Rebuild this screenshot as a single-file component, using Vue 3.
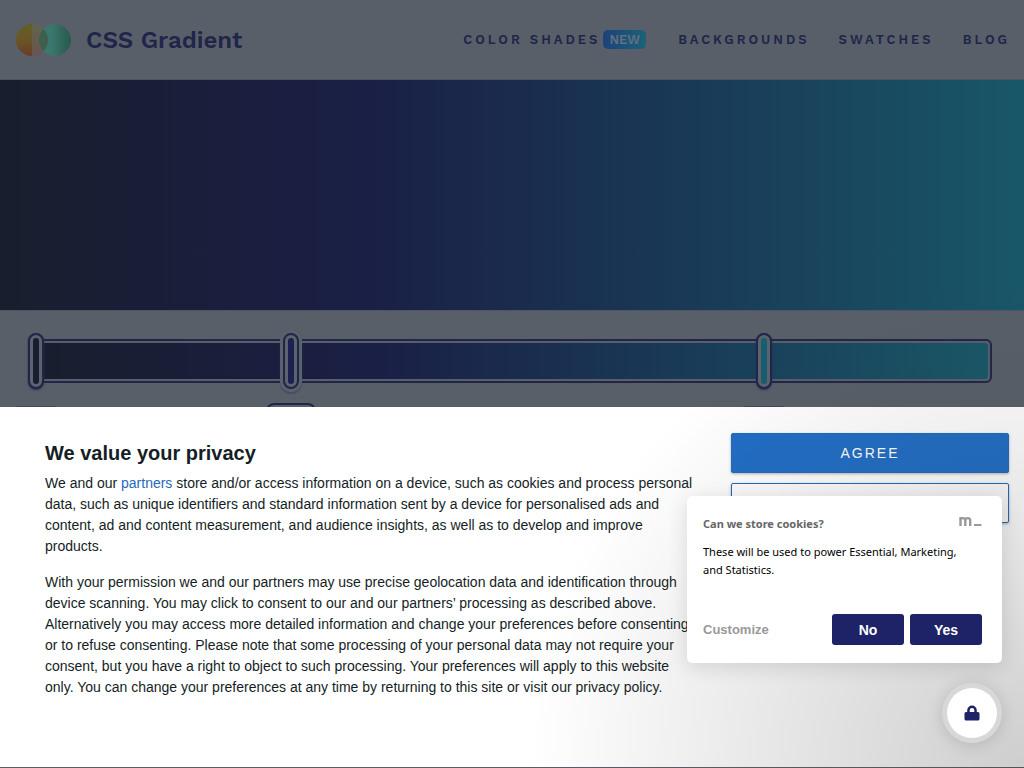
<script setup>
const stops = [
  { id: 1, pos: 0, color: '#191e2e', active: false },
  { id: 2, pos: 27, color: '#1c2150', active: true },
  { id: 3, pos: 77, color: '#195d70', active: false },
]
</script>

<template>
  <div class="page">
    <header class="header">
      <a class="brand" href="#">
        <svg class="logo" viewBox="0 0 56 32" aria-hidden="true">
          <defs>
            <linearGradient id="warm" x1="0" y1="0" x2="0" y2="1">
              <stop offset="0" stop-color="#625f27" />
              <stop offset="0.5" stop-color="#695627" />
              <stop offset="1" stop-color="#693d2b" />
            </linearGradient>
            <linearGradient id="pale" x1="0" y1="0" x2="0" y2="1">
              <stop offset="0" stop-color="#62644d" />
              <stop offset="1" stop-color="#6b5450" />
            </linearGradient>
            <linearGradient id="mint" x1="0" y1="0" x2="1" y2="0">
              <stop offset="0" stop-color="#3c7872" />
              <stop offset="0.4" stop-color="#3b766d" />
              <stop offset="1" stop-color="#28594c" />
            </linearGradient>
            <clipPath id="lens"><circle cx="16" cy="16" r="16" /></clipPath>
          </defs>
          <circle cx="16" cy="16" r="16" fill="url(#pale)" />
          <path d="M16 0a16 16 0 0 0 0 32z" fill="url(#warm)" />
          <circle cx="39" cy="16" r="16" fill="url(#mint)" />
          <circle cx="39" cy="16" r="16" fill="#3e5f4e" clip-path="url(#lens)" />
        </svg>
        <span>CSS Gradient</span>
      </a>
      <nav class="nav">
        <a href="#">Color Shades<span class="badge">NEW</span></a>
        <a href="#">Backgrounds</a>
        <a href="#">Swatches</a>
        <a href="#">Blog</a>
      </nav>
    </header>

    <section class="hero"></section>

    <section class="editor">
      <div class="bar">
        <div class="fill"></div>
        <div class="track">
          <button
            v-for="s in stops"
            :key="s.id"
            class="handle"
            :class="{ active: s.active }"
            :style="{ left: s.pos + '%' }"
            :aria-label="'Colour stop ' + s.id"
          >
            <i :style="{ background: s.color }"></i>
          </button>
          <span
            v-for="s in stops"
            :key="'p' + s.id"
            class="position"
            :class="{ current: s.active }"
            :style="{ left: s.pos + '%' }"
          ></span>
        </div>
      </div>
    </section>

    <section class="consent" role="dialog" aria-labelledby="consent-title">
      <div class="copy">
        <h2 id="consent-title">We value your privacy</h2>
        <p>
          We and our <a href="#">partners</a> store and/or access information on a device, such as
          cookies and process personal data, such as unique identifiers and standard information
          sent by a device for personalised ads and content, ad and content measurement, and
          audience insights, as well as to develop and improve products.
        </p>
        <p>
          With your permission we and our partners may use precise geolocation data and
          identification through device scanning. You may click to consent to our and our partners’
          processing as described above. Alternatively you may access more detailed information and
          change your preferences before consenting or to refuse consenting. Please note that some
          processing of your personal data may not require your consent, but you have a right to
          object to such processing. Your preferences will apply to this website only. You can
          change your preferences at any time by returning to this site or visit our privacy policy.
        </p>
      </div>
      <div class="choices">
        <button class="agree">AGREE</button>
        <button class="more" aria-label="Options"></button>
      </div>
    </section>

    <div class="shade"></div>

    <section class="cookies" role="dialog" aria-labelledby="cookies-title">
      <div class="cookies-head">
        <h3 id="cookies-title">Can we store cookies?</h3>
        <svg class="mark" viewBox="0 0 23 12" aria-hidden="true">
          <path d="M1.500 11V2M1.500 5.500C1.500 2.300 6.300 2.300 6.300 5.500V11M6.300 5.500C6.300 2.300 11.200 2.300 11.200 5.500V11" fill="none" stroke="#999" stroke-width="2.400" />
          <path d="M15 10h7.500" stroke="#999" stroke-width="2" />
        </svg>
      </div>
      <p>These will be used to power Essential, Marketing, and Statistics.</p>
      <div class="cookies-actions">
        <button class="customize">Customize</button>
        <button class="solid">No</button>
        <button class="solid">Yes</button>
      </div>
    </section>

    <button class="lock" aria-label="Privacy settings">
      <svg viewBox="0 0 16 16" aria-hidden="true">
        <path d="M3.200 7V5.300a4.800 4.800 0 0 1 9.600 0V7h1.200A1.500 1.500 0 0 1 15.500 8.500V14A1.500 1.500 0 0 1 14 15.500H2A1.500 1.500 0 0 1 .5 14V8.500A1.500 1.500 0 0 1 2 7zM5.700 7h4.600V5.300a2.300 2.300 0 0 0-4.600 0z" fill="#1d2366" />
      </svg>
    </button>
  </div>
</template>

<style>
body {
  background: #585f68;
  overflow: hidden;
}
</style>

<style scoped>
.page {
  position: relative;
  min-height: 100vh;
  overflow: hidden;
  background: #585f68;
  font-family: "Liberation Sans", Arial, sans-serif;
}
.page * {
  box-sizing: border-box;
}
button {
  font-family: inherit;
  cursor: pointer;
}
a {
  text-decoration: none;
}
.header {
  height: 80px;
  padding: 0 14px 0 16px;
  display: flex;
  align-items: center;
  justify-content: space-between;
  border-bottom: 1px solid #50555f;
  color: #20264a;
  font-family: "Work Sans", Inter, sans-serif;
}
.brand {
  display: flex;
  align-items: center;
  gap: 14px;
  color: inherit;
  font-size: 24px;
  font-weight: 600;
}
.logo {
  width: 56px;
  height: 32px;
}
.nav {
  display: flex;
  gap: 29px;
}
.nav a {
  display: flex;
  align-items: center;
  color: inherit;
  font-size: 13px;
  font-weight: 600;
  letter-spacing: 3px;
  text-transform: uppercase;
}
.badge {
  margin-left: 3px;
  margin-right: 3px;
  padding: 0 6px;
  height: 19px;
  line-height: 19px;
  border-radius: 5px;
  background: linear-gradient(90deg, #1c427a, #1b6278);
  color: #626f80;
  letter-spacing: 0;
}
.hero {
  height: 230px;
  background: linear-gradient(90deg, #191e2e 0%, #1a1f46 36%, #19425b 77%, #185768 100%);
}
.editor {
  padding: 28px 32px 0;
  border-top: 1px solid #50555f;
}
.bar {
  position: relative;
  height: 44px;
  padding: 2px;
  border: 2px solid #20264a;
  border-radius: 6px;
}
.fill {
  height: 100%;
  border-radius: 3px;
  background: linear-gradient(90deg, #191e2e 0%, #1a1f46 36%, #19425b 77%, #185768 100%);
}
.track {
  position: absolute;
  top: 0;
  bottom: 0;
  left: 2px;
  right: 9px;
}
.handle {
  position: absolute;
  top: -8px;
  width: 16px;
  height: 56px;
  margin-left: -8px;
  padding: 3px;
  border: 2px solid #20264a;
  border-radius: 8px;
  background: #5c636d;
  box-shadow: 0 1px 2px #2a2f4b;
}
.handle.active {
  box-shadow: 0 0 0 3px #5a616b, 0 2px 1px 3px #484e5b;
}
.handle i {
  display: block;
  height: 100%;
  border-radius: 4px;
}
.position {
  position: absolute;
  top: 65px;
  width: 42px;
  height: 30px;
  margin-left: -21px;
  border-top: 1px solid #42485a;
  border-radius: 3px;
}
.position.current {
  top: 62px;
  width: 50px;
  margin-left: -25px;
  border: 2px solid #20264a;
  border-radius: 8px;
}
.consent {
  position: absolute;
  left: 0;
  right: 0;
  bottom: 1px;
  min-height: 360px;
  padding: 26px 15px 0 45px;
  display: flex;
  justify-content: space-between;
  background: #fff;
  color: #141e24;
}
.copy {
  width: 652px;
  padding-top: 8px;
}
h2 {
  margin: 0 0 8px;
  font-size: 20px;
  line-height: 24px;
}
.copy p {
  margin: 0 0 15px;
  font-size: 14px;
  line-height: 21px;
}
.copy a {
  color: #1f69c0;
}
.choices {
  width: 278px;
  display: flex;
  flex-direction: column;
  gap: 10px;
}
.choices button {
  height: 40px;
  border: 1px solid #1f69c0;
  border-radius: 2px;
  font-size: 14px;
  letter-spacing: 2px;
  box-shadow: 0 1px 3px rgba(0, 0, 0, 0.3);
}
.choices .agree {
  background: #206dc5;
  color: #fff;
}
.choices .more {
  background: #fff;
}
.shade {
  position: absolute;
  right: 0;
  bottom: 0;
  width: 500px;
  height: 500px;
  pointer-events: none;
  background: radial-gradient(ellipse at bottom right, rgba(60, 60, 60, 0.25) 0%, rgba(60, 60, 60, 0) 70%);
}
.cookies {
  position: absolute;
  right: 22px;
  bottom: 105px;
  width: 315px;
  height: 167px;
  padding: 18px 20px 18px 16px;
  display: flex;
  flex-direction: column;
  border-radius: 5px;
  background: #fff;
  box-shadow: 0 4px 20px rgba(0, 0, 0, 0.12);
  font-family: "Segoe UI", "Noto Sans", sans-serif;
}
.cookies-head {
  display: flex;
  justify-content: space-between;
}
h3 {
  margin: 0;
  color: #666;
  font-size: 11px;
  line-height: 20px;
}
.mark {
  width: 23px;
  height: 12px;
  margin-top: 1px;
}
.cookies p {
  margin: 9px 0 0;
  padding-right: 16px;
  color: #000;
  font-size: 11px;
  line-height: 18px;
}
.cookies-actions {
  margin-top: auto;
  display: flex;
  gap: 6px;
  font-family: "Liberation Sans", Arial, sans-serif;
}
.cookies-actions button {
  border: 0;
  font-size: 14px;
  font-weight: 700;
}
.cookies-actions .customize {
  margin-right: auto;
  padding: 0;
  background: none;
  color: #999;
  font-size: 13px;
}
.solid {
  width: 72px;
  height: 31px;
  border-radius: 3px;
  background: #1d2366;
  color: #fff;
}
.lock {
  position: absolute;
  right: 27px;
  bottom: 30px;
  width: 50px;
  height: 50px;
  padding: 0;
  display: grid;
  place-items: center;
  border: 0;
  border-radius: 50%;
  background: #fff;
  box-shadow: 0 0 0 5px #d8d8d8, 0 2px 16px 5px rgba(0, 0, 0, 0.14);
}
.lock svg {
  width: 16px;
  height: 16px;
}
</style>
